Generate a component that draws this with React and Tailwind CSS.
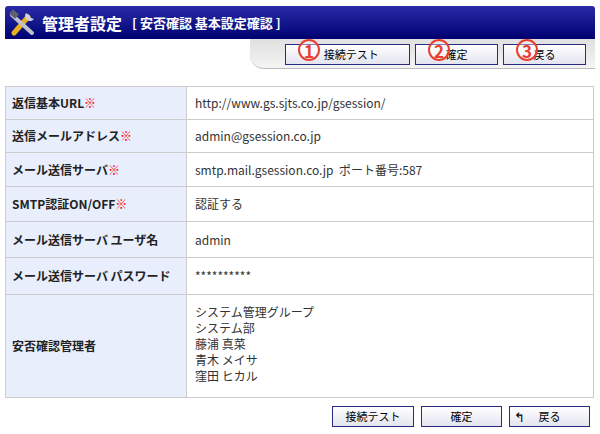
const F={fontFamily:'"Noto Sans CJK JP","Liberation Sans",sans-serif'};
const rows=[
["返信基本URL",true,"http://www.gs.sjts.co.jp/gsession/",33],
["送信メールアドレス",true,"admin@gsession.co.jp",33],
["メール送信サーバ",true,"smtp.mail.gsession.co.jp\u00a0\u00a0ポート番号:587",34],
["SMTP認証ON/OFF",true,"認証する",35],
["メール送信サーバ ユーザ名",false,"admin",36],
["メール送信サーバ パスワード",false,"**********",37],
];
function Btn({w,children,num}){return <div className="relative h-[21px] border border-[#2a2a80] bg-gradient-to-b from-white to-[#e4e4f0] flex items-center justify-center text-[11px] text-black" style={{width:w}}>{children}{num&&<span className="absolute left-[12px] top-[-6px] w-[22px] h-[22px] rounded-full border-2 border-[#e84030] text-[#e84030] text-[17px] font-bold leading-none flex items-center justify-center bg-white/40">{num}</span>}</div>}
export default function App(){return <div className="w-[600px] h-[434px] bg-white relative" style={F}>
<div className="absolute left-[5px] top-[6px] w-[590px] h-[33px] bg-gradient-to-b from-[#2a2aa8] to-[#000070] rounded-t-[3px] flex items-center text-white">
<svg width="30" height="28" viewBox="0 0 30 28" className="ml-[3px]"><path d="M6 24 L20 8" stroke="#e8b020" strokeWidth="5" strokeLinecap="round"/><path d="M4 6 L24 24" stroke="#c0c0c8" strokeWidth="4" strokeLinecap="round"/><path d="M18 4 a5 5 0 1 0 8 6 l-3 -1 -2 -3z" fill="#d0d0d8"/><rect x="2" y="2" width="8" height="6" fill="#606070" transform="rotate(40 6 5)"/></svg>
<span className="ml-[4px] text-[16px] font-bold">管理者設定</span><span className="ml-[10px] text-[13px] font-bold">[ 安否確認 基本設定確認 ]</span></div>
<div className="absolute left-[250px] top-[39px] w-[345px] h-[30px] bg-[#d8d8d8] rounded-bl-[14px]" style={{clipPath:'polygon(0 0,100% 0,100% 100%,20px 100%)'}}></div>
<div className="absolute left-[250px] top-[39px] w-[345px] h-[30px] bg-gradient-to-b from-[#e0e0e0] to-[#f4f4f4] rounded-bl-[14px] border-b border-[#bbb]"></div>
<div className="absolute left-[285px] top-[44px] flex gap-[5px]"><Btn w={125} num="1">&nbsp;&nbsp;&nbsp;接続テスト</Btn><Btn w={83} num="2">確定</Btn><Btn w={83} num="3">戻る</Btn></div>
<div className="absolute left-[5px] top-[86px] w-[589px] border border-[#ccc] text-[12px]">
{rows.map(([l,r,v,h])=><div key={l} className="flex border-b border-[#ccc]" style={{height:h}}><div className="w-[181px] bg-[#e8eefc] border-r border-[#ccc] flex items-center pl-[6px] font-bold text-[#222]">{l}{r&&<span className="text-[#f00] font-normal">※</span>}</div><div className="flex-1 flex items-center pl-[8px] text-[#333]">{v}</div></div>)}
<div className="flex h-[102px]"><div className="w-[181px] bg-[#e8eefc] border-r border-[#ccc] flex items-center pl-[6px] font-bold text-[#222]">安否確認管理者</div><div className="flex-1 pl-[8px] pt-[9px] text-[#333] leading-[16px]"><div>システム管理グループ</div><div>システム部</div><div>藤浦 真菜</div><div>青木 メイサ</div><div>窪田 ヒカル</div></div></div>
</div>
<div className="absolute left-[332px] top-[406px] flex gap-[7px]"><Btn w={82}>接続テスト</Btn><Btn w={81}>確定</Btn><Btn w={81}><span className="absolute left-[4px] text-[13px]">↰</span>戻る</Btn></div>
</div>}
